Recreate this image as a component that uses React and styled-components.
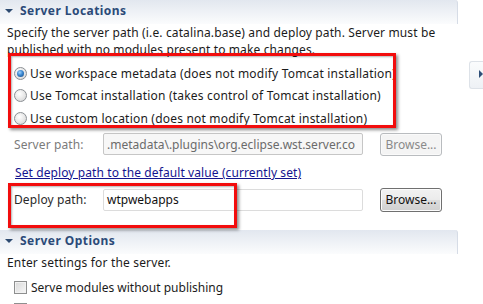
import React from 'react';
import styled, { createGlobalStyle } from 'styled-components';

const Global = createGlobalStyle`
  html, body { margin: 0; padding: 0; background: #fff; overflow: hidden; }
  body {
    font-family: "Noto Sans", "Open Sans", sans-serif;
    font-size: 12px;
    color: #1b1b1b;
    width: 483px;
    height: 304px;
  }
`;

const Page = styled.div`
  display: flex;
  width: 483px;
  height: 304px;
  overflow: hidden;
`;

const Main = styled.div`
  position: relative;
  width: 458px;
  flex: none;
`;

const Side = styled.div`
  flex: 1;
  padding: 61px 0 0 11px;
`;

const SideTab = styled.div`
  width: 16px;
  height: 28px;
  box-sizing: border-box;
  border: 1px solid #dde2e8;
  border-right: none;
  border-radius: 3px 0 0 3px;
  background: linear-gradient(#fbfcfd, #eef1f5);
  display: flex;
  align-items: flex-start;
  padding: 8px 0 0 9px;
`;

const SectionHeader = styled.div`
  height: 24px;
  box-sizing: border-box;
  padding: 2px 0 0 5px;
  display: flex;
  align-items: flex-start;
  gap: 7px;
  background: linear-gradient(#e2e7ef, #fbfcfd);
  border-right: 1px solid #d6dce6;
  border-top-right-radius: 3px;
  font-weight: bold;
  color: #2b4a78;
  line-height: 17px;
  letter-spacing: 0.45px;
`;

const Twisty = styled.span`
  margin-top: 7px;
  width: 0;
  height: 0;
  border-left: 4px solid transparent;
  border-right: 4px solid transparent;
  border-top: 4px solid #2d4a70;
`;

const Text = styled.div`
  padding-left: ${p => p.$indent || 7}px;
  line-height: 17px;
  white-space: nowrap;
  letter-spacing: ${p => p.$ls || 0}px;
`;

const RadioGroup = styled.div`
  padding: 4px 0 0 14px;
  letter-spacing: 0.2px;
`;

const CheckGroup = styled.div`
  padding-left: 14px;
`;

const OptionRow = styled.label`
  display: flex;
  align-items: center;
  gap: ${p => p.$gap || 3}px;
  height: ${p => p.$h || 22.5}px;
  white-space: nowrap;
`;

const RadioDot = styled.span`
  width: 13px;
  height: 13px;
  box-sizing: border-box;
  border-radius: 50%;
  border: 1px solid #8b8f94;
  background: radial-gradient(circle at 40% 35%, #ffffff 0%, #e6e6e6 55%, #cfd0d2 100%);
  display: flex;
  align-items: center;
  justify-content: center;
  flex: none;
  &::after {
    content: '';
    width: 7px;
    height: 7px;
    border-radius: 50%;
    display: ${p => (p.$checked ? 'block' : 'none')};
    background: radial-gradient(circle at 40% 35%, #9fd3ff 0%, #3a86cf 45%, #14467c 100%);
  }
`;

const CheckBox = styled.span`
  width: 13px;
  height: 13px;
  box-sizing: border-box;
  border: 1px solid #8e8f8f;
  background: linear-gradient(135deg, #d9d9d9, #f7f7f7);
  box-shadow: inset 0 0 0 1px #f2f2f2;
  flex: none;
`;

const FieldRow = styled.div`
  display: flex;
  align-items: center;
  height: 24px;
  padding-left: 14px;
  margin-top: ${p => p.$mt || 0}px;
`;

const Label = styled.span`
  width: 89px;
  flex: none;
  color: ${p => (p.$disabled ? '#7b7b7b' : '#2a2a2a')};
  white-space: nowrap;
  letter-spacing: 0.1px;
`;

const Field = styled.div`
  width: 260px;
  height: 22px;
  box-sizing: border-box;
  border: 1px solid ${p => (p.$disabled ? '#c6c6c6' : '#dcdcdc')};
  border-radius: 2px;
  background: ${p => (p.$disabled ? '#f7f7f7' : '#fff')};
  color: ${p => (p.$disabled ? '#6b6b6b' : '#111')};
  padding: 0 3px;
  display: flex;
  align-items: center;
  overflow: hidden;
  white-space: nowrap;
`;

const Button = styled.div`
  margin-left: 17px;
  width: 62px;
  height: ${p => (p.$disabled ? 23 : 24)}px;
  box-sizing: border-box;
  border: 1px solid ${p => (p.$disabled ? '#b9bcbf' : '#707070')};
  border-radius: 3px;
  background: ${p =>
    p.$disabled
      ? '#f4f4f4'
      : 'linear-gradient(#f2f2f2 0%, #ebebeb 50%, #dddddd 51%, #cfcfcf 100%)'};
  box-shadow: inset 0 0 0 1px ${p => (p.$disabled ? '#fafafa' : '#fcfcfc')};
  color: ${p => (p.$disabled ? '#8a8a8a' : '#111')};
  display: flex;
  align-items: center;
  justify-content: center;
`;

const Link = styled.a`
  display: block;
  margin: 8px 0 0 15px;
  line-height: 17px;
  color: #14148f;
  text-decoration: underline;
  white-space: nowrap;
  letter-spacing: 0.1px;
  cursor: pointer;
`;

const Spacer = styled.div`
  height: ${p => p.$h}px;
`;

const Annotation = styled.div`
  position: absolute;
  box-sizing: border-box;
  border: 3px solid #f20d0d;
  box-shadow: 2px 2px 3px rgba(0, 0, 0, 0.45), inset 1px 1px 2px rgba(0, 0, 0, 0.3);
  pointer-events: none;
`;

export default function App() {
  return (
    <>
      <Global />
      <Page>
        <Main>
          <SectionHeader>
            <Twisty />
            <span>Server Locations</span>
          </SectionHeader>
          <Text $ls={0.13}>Specify the server path (i.e. catalina.base) and deploy path. Server must be</Text>
          <Text $ls={0.13}>published with no modules present to make changes.</Text>
          <RadioGroup>
            <OptionRow>
              <RadioDot $checked />
              <span>Use workspace metadata (does not modify Tomcat installation)</span>
            </OptionRow>
            <OptionRow>
              <RadioDot />
              <span>Use Tomcat installation (takes control of Tomcat installation)</span>
            </OptionRow>
            <OptionRow>
              <RadioDot />
              <span>Use custom location (does not modify Tomcat installation)</span>
            </OptionRow>
          </RadioGroup>
          <FieldRow $mt={2.5}>
            <Label $disabled>Server path:</Label>
            <Field $disabled>.metadata\.plugins\org.eclipse.wst.server.co</Field>
            <Button $disabled>Browse...</Button>
          </FieldRow>
          <Link>Set deploy path to the default value (currently set)</Link>
          <FieldRow $mt={6.5}>
            <Label>Deploy path:</Label>
            <Field>wtpwebapps</Field>
            <Button>Browse...</Button>
          </FieldRow>
          <Spacer $h={18} />
          <SectionHeader>
            <Twisty />
            <span>Server Options</span>
          </SectionHeader>
          <Text $ls={0.17}>Enter settings for the server.</Text>
          <Spacer $h={5.5} />
          <CheckGroup>
            <OptionRow $gap={4} $h={22}>
              <CheckBox />
              <span>Serve modules without publishing</span>
            </OptionRow>
            <OptionRow $gap={4} $h={22}>
              <CheckBox />
              <span>Publish module contexts to separate XML files</span>
            </OptionRow>
          </CheckGroup>
          <Annotation style={{ left: 8, top: 53, width: 388, height: 75 }} />
          <Annotation style={{ left: 8, top: 183, width: 229, height: 45 }} />
        </Main>
        <Side>
          <SideTab>
            <svg width="4" height="8" viewBox="0 0 4 8">
              <path d="M0 0 L4 4 L0 8 Z" fill="#2f4f78" />
            </svg>
          </SideTab>
        </Side>
      </Page>
    </>
  );
}
